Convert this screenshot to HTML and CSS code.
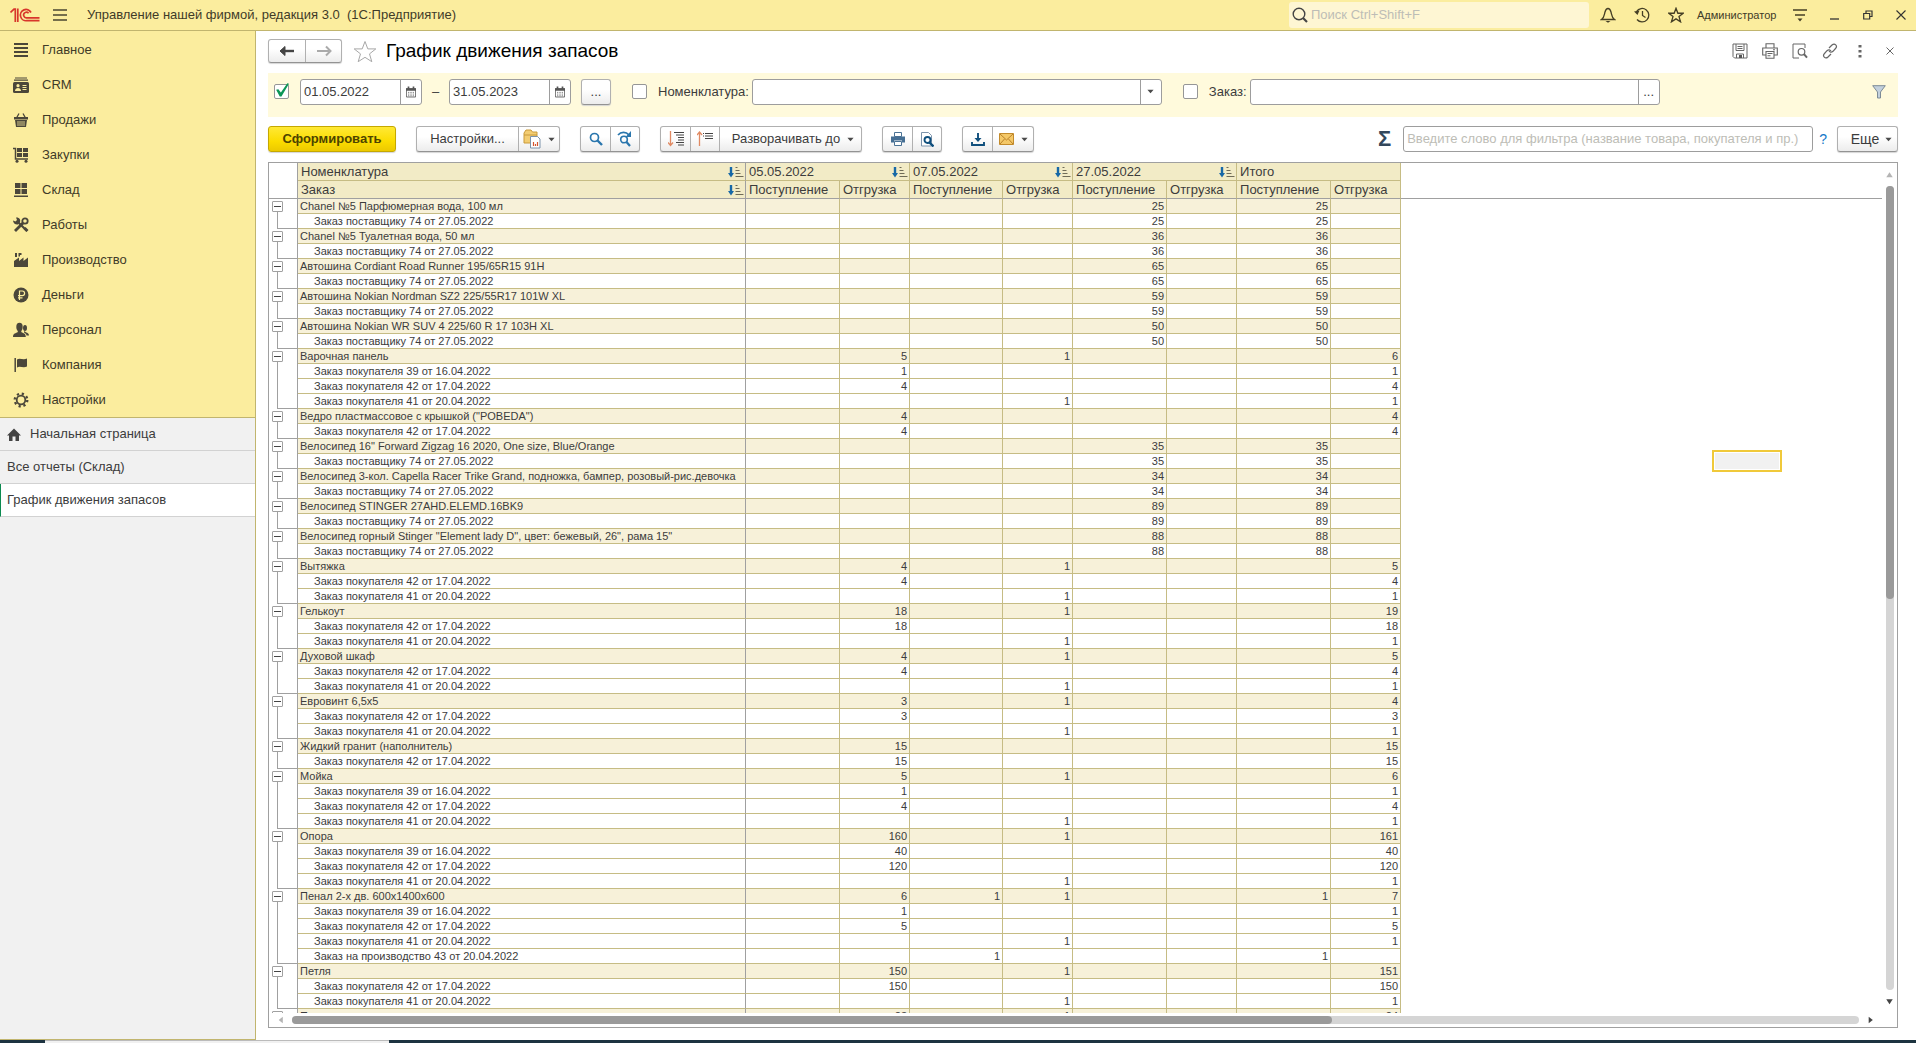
FILE: index.html
```html
<!DOCTYPE html>
<html lang="ru">
<head>
<meta charset="utf-8">
<title>График движения запасов</title>
<link rel="stylesheet" href="styles.css">
</head>
<body>
<svg class="defs" aria-hidden="true">
  <symbol id="sort" viewBox="0 0 16 12"><path d="M3 1v7" stroke="#1768a6" stroke-width="2.400"/><path d="M0 7h6L3 11.500z" fill="#1768a6"/><path d="M7.500 1.500h2M7.500 4.500h4M7.500 7.500h5M7.500 10.500h8" stroke="#6f6b57"/></symbol>
  <symbol id="caret" viewBox="0 0 8 5"><path d="M.5.500h7L4 4.500z" fill="#4a4a4a"/></symbol>
  <symbol id="cal" viewBox="0 0 12 13"><path d="M.5 2.500h11v10H.5z" fill="#fff" stroke="#555"/><path d="M0 2h12v3H0zM2 0h2v3H2zM8 0h2v3H8z" fill="#555"/><path d="M2.500 7h7M2.500 9h7M2.500 11h7" stroke="#555" stroke-dasharray="1 1"/></symbol>
  <symbol id="star" viewBox="0 0 24 23"><path d="M12 1.500l2.800 7.400h8l-6.300 5 2.300 7.800L12 17.300l-6.800 4.400 2.300-7.800-6.300-5h8z" fill="none" stroke="currentColor"/></symbol>
</svg>

<header class="titlebar">
  <svg class="logo" viewBox="0 0 30 14"><g fill="none" stroke="#d8362b" stroke-width="1.700"><path d="M.5 4.500L4 1.200h1.300V14M7.800 14V.5"/><path d="M21 4.500A5.600 5.600 0 1 0 17 12.600h12.500"/><path d="M18.600 5.300A2.800 2.800 0 1 0 17 9.800h12.500"/></g></svg>
  <button class="bare" aria-label="Главное меню"><svg width="14" height="12" viewBox="0 0 14 12"><path d="M0 1h14M0 6h14M0 11h14" stroke="#4a4630" stroke-width="1.300"/></svg></button>
  <span class="app-name">Управление нашей фирмой, редакция 3.0&nbsp; (1С:Предприятие)</span>
  <label class="search">
    <svg width="16" height="16" viewBox="0 0 16 16"><circle cx="7" cy="7" r="5.800" fill="none" stroke="#444" stroke-width="1.400"/><path d="M11 11l4 4" stroke="#444" stroke-width="2.200"/></svg>
    <input type="text" placeholder="Поиск Ctrl+Shift+F" aria-label="Поиск">
  </label>
  <div class="tools">
    <button class="bare" aria-label="Оповещения"><svg width="16" height="16" viewBox="0 0 16 16"><path d="M1.500 12.500c3-2 2.700-4.500 3.500-7.500.6-2.200 1.500-3.500 3-3.500s2.400 1.300 3 3.500c.8 3 .5 5.500 3.500 7.500z" fill="none" stroke="#453f25" stroke-width="1.300"/><path d="M5.500 14h5L8 15.800z" fill="#453f25"/></svg></button>
    <button class="bare" aria-label="История"><svg width="16" height="16" viewBox="0 0 16 16"><path d="M2.500 4.500A6.700 6.700 0 1 1 3 12.500M8.500 4v4.500l3 2" fill="none" stroke="#453f25" stroke-width="1.300"/><path d="M0 4.500l5.500-1L3.500 8z" fill="#453f25"/></svg></button>
    <button class="bare" aria-label="Избранное"><svg width="16" height="16" stroke-width="2"><use href="#star"/></svg></button>
  </div>
  <span class="user">Администратор</span>
  <div class="window-tools">
    <button class="bare" aria-label="Сервис"><svg width="14" height="13" viewBox="0 0 14 13"><path d="M0 1h14M2 6h10" stroke="#453f25" stroke-width="1.300"/><path d="M4.500 9.500h5L7 12.500z" fill="#453f25"/></svg></button>
    <button class="bare" aria-label="Свернуть"><svg width="10" height="10" viewBox="0 0 10 10"><path d="M0 9h9" stroke="#333" stroke-width="1.300"/></svg></button>
    <button class="bare" aria-label="Восстановить"><svg width="10" height="10" viewBox="0 0 10 10"><path d="M.7 3.500h6v5.500h-6zM3 3.500V1h6v5.500H6.700" fill="none" stroke="#333" stroke-width="1.200"/></svg></button>
    <button class="bare" aria-label="Закрыть"><svg width="10" height="10" viewBox="0 0 10 10"><path d="M.5.500l9 9M9.500.500l-9 9" stroke="#333" stroke-width="1.100"/></svg></button>
  </div>
</header>

<div class="workspace">
  <aside class="sidebar">
    <nav class="sections">
      <a href="#"><svg viewBox="0 0 16 16"><path d="M1 2h14M1 6h14M1 10h14M1 14h14" stroke="currentColor" stroke-width="2"/></svg>Главное</a>
      <a href="#"><svg viewBox="0 0 16 16"><path d="M2 1h12M1 3.200h14" stroke="currentColor" stroke-width="1.200"/><rect y="5" width="16" height="11" rx="1.500" fill="currentColor"/><path d="M9.500 8.500h4M9.500 10.500h4M9.500 12.500h4" stroke="#fbed9e"/><circle cx="5" cy="8.700" r="1.600" fill="#fbed9e"/><path d="M2 14c0-4 6-4 6 0z" fill="#fbed9e"/></svg>CRM</a>
      <a href="#"><svg viewBox="0 0 16 16"><path d="M3.500 6L6 1.500M12.500 6L10 1.500" stroke="currentColor" stroke-width="1.300"/><path d="M1 5h14v2.500H1zM2 8h12l-1 7H3z" fill="currentColor"/><path d="M5 9v5M7 9v5M9 9v5M11 9v5" stroke="#fbed9e" stroke-width=".8"/></svg>Продажи</a>
      <a href="#"><svg viewBox="0 0 16 16"><path d="M0 1.500h2.500V12H15" fill="none" stroke="currentColor" stroke-width="1.500"/><path d="M4 1h5v4H4zM10 1h5v4h-5zM4 6h5v4H4zM10 6h5v4h-5z" fill="currentColor"/><circle cx="4" cy="14.300" r="1.500" fill="currentColor"/><circle cx="13" cy="14.300" r="1.500" fill="currentColor"/></svg>Закупки</a>
      <a href="#"><svg viewBox="0 0 16 16"><path d="M2 1h5.500v5H2zM8.500 1H14v5H8.500zM2 7h5.500v5H2zM8.500 7H14v5H8.500zM1 13.500h14v1.500H1z" fill="currentColor"/></svg>Склад</a>
      <a href="#"><svg viewBox="0 0 16 16"><path d="M2 14l8-8" stroke="currentColor" stroke-width="2.800"/><path d="M5.500 5.500L14 14" stroke="currentColor" stroke-width="2.200"/><path d="M0 3.500l2.500 1 1.500-1.500-1-2.500c3-.5 5 2 4 4.500L5 7.500C2.500 8 0 6 0 3.500z" fill="currentColor"/><circle cx="12" cy="4" r="2.700" fill="none" stroke="currentColor" stroke-width="1.800"/><path d="M10.500 12l3 3 2-2-3-3z" fill="currentColor"/></svg>Работы</a>
      <a href="#"><svg viewBox="0 0 16 16"><path d="M1 15V9l5-3.500V9l4.500-3.500V9L15 5.500V15zM2 1h2v4H2zM5.500 1h3v2H7v1.500H5.500z" fill="currentColor"/></svg>Производство</a>
      <a href="#"><svg viewBox="0 0 16 16"><circle cx="8" cy="8" r="7.500" fill="currentColor"/><path d="M6.500 13V4h2.800a2.300 2.300 0 0 1 0 4.600H5M5 10.800h4.500" fill="none" stroke="#fbed9e" stroke-width="1.200"/></svg>Деньги</a>
      <a href="#"><svg viewBox="0 0 16 16"><ellipse cx="6.500" cy="5" rx="3.200" ry="4.200" fill="currentColor"/><path d="M0 15c0-4 3-3.500 4.800-5V8h3.500v2c1.800 1.500 4.500 1 4.500 5z" fill="currentColor"/><ellipse cx="12" cy="6" rx="2" ry="3" fill="currentColor"/><path d="M11.500 8.500c1 3 4.500 1.500 4.500 5h-2.500c0-2-2-2.500-2.500-3z" fill="currentColor"/></svg>Персонал</a>
      <a href="#"><svg viewBox="0 0 16 16"><path d="M2.200 1v14" stroke="currentColor" stroke-width="1.500"/><path d="M4 2.500c3-2 6 1 10-1v8c-4 2-7-1-10 1z" fill="currentColor"/></svg>Компания</a>
      <a href="#"><svg viewBox="0 0 16 16"><circle cx="8" cy="8" r="4.300" fill="none" stroke="currentColor" stroke-width="1.800"/><circle cx="8" cy="8" r="6.300" fill="none" stroke="currentColor" stroke-width="2.300" stroke-dasharray="2.200 2.750"/></svg>Настройки</a>
    </nav>
    <nav class="windows">
      <a href="#" class="home"><svg viewBox="0 0 14 13"><path d="M7 .5l7 7h-2V13H8.500V8.500h-3V13H2V7.500H0z" fill="currentColor"/></svg>Начальная страница</a>
      <a href="#">Все отчеты (Склад)</a>
      <a href="#" class="current">График движения запасов</a>
    </nav>
  </aside>

  <main class="content">
    <div class="form-head">
      <div class="group">
        <button aria-label="Назад"><svg width="16" height="12" viewBox="0 0 16 12"><path d="M3 6h12" stroke="#444" stroke-width="2.400"/><path d="M1 6l5-4.500v9z" fill="#444" stroke="#444"/></svg></button>
        <button aria-label="Вперед"><svg width="16" height="12" viewBox="0 0 16 12"><path d="M1 6h12" stroke="#aaa" stroke-width="2"/><path d="M10 1.500L14.500 6 10 10.500" fill="none" stroke="#aaa" stroke-width="2"/></svg></button>
      </div>
      <button class="bare favorite" aria-label="В избранное"><svg width="24" height="23"><use href="#star"/></svg></button>
      <h1>График движения запасов</h1>
      <div class="form-tools">
        <button class="bare" aria-label="Сохранить"><svg viewBox="0 0 16 16"><path d="M1 1h14v14H2.500L1 13.500zM4 1v6.500h8V1M5.500 3.500h5M5.500 5.500h5M4.500 15v-4h7v4" fill="none" stroke="#666"/><path d="M7 12h3v3H7z" fill="#555"/></svg></button>
        <button class="bare" aria-label="Печать"><svg viewBox="0 0 16 16"><path d="M4 5V.7h8V5M4 12H.7V5h14.600v7H12M4 8.500h8v6.800H4zM5.500 10.500h5M5.500 12.800h3M11 6.700h2" fill="none" stroke="#666" stroke-width="1.100"/></svg></button>
        <button class="bare" aria-label="Просмотр"><svg viewBox="0 0 16 16"><path d="M7 15H1V1h12v4" fill="none" stroke="#666"/><circle cx="9.500" cy="8.800" r="3.300" fill="none" stroke="#666" stroke-width="1.200"/><path d="M12 11.200l3 3.500" stroke="#666" stroke-width="2"/></svg></button>
        <button class="bare" aria-label="Ссылка"><svg viewBox="0 0 16 16"><path d="M7 5l3-3c2.700-2.500 6 .8 3.500 3.500L11 8.300c-1.500 1.300-3 1-4-.3M9 11l-3 3c-2.700 2.500-6-.8-3.500-3.500L5 7.700c1.500-1.300 3-1 4 .3" fill="none" stroke="#666" stroke-width="1.200"/></svg></button>
        <button class="bare" aria-label="Еще"><svg viewBox="0 0 16 16"><path d="M6.500 2h3v2.500h-3zM6.500 7h3v2.500h-3zM6.500 12h3v2.500h-3z" fill="#666"/></svg></button>
        <button class="bare" aria-label="Закрыть"><svg viewBox="0 0 16 16"><path d="M4.500 4.500l7 7M11.500 4.500l-7 7" stroke="#666"/></svg></button>
      </div>
    </div>

    <form class="filters">
      <input type="checkbox" checked aria-label="Период">
      <div class="field date"><input type="text" value="01.05.2022" aria-label="Начало периода"><button type="button" aria-label="Календарь"><svg width="10" height="12"><use href="#cal"/></svg></button></div>
      <span class="dash">–</span>
      <div class="field date"><input type="text" value="31.05.2023" aria-label="Конец периода"><button type="button" aria-label="Календарь"><svg width="10" height="12"><use href="#cal"/></svg></button></div>
      <button type="button" class="btn period">...</button>
      <input type="checkbox" id="by-item"><label for="by-item">Номенклатура:</label>
      <div class="field wide"><input type="text" aria-label="Номенклатура"><button type="button" aria-label="Выбрать"><svg width="7" height="5"><use href="#caret"/></svg></button></div>
      <input type="checkbox" id="by-order"><label for="by-order">Заказ:</label>
      <div class="field wide"><input type="text" aria-label="Заказ"><button type="button">...</button></div>
      <button type="button" class="bare funnel" aria-label="Отбор"><svg width="14" height="14" viewBox="0 0 14 14"><path d="M.7.700h12.600L8.500 7v6H5.500V7z" fill="#c3d0dd" stroke="#7d8b97"/></svg></button>
    </form>

    <div class="toolbar">
      <button class="btn primary">Сформировать</button>
      <div class="group">
        <button class="settings">Настройки...</button>
        <button class="with-caret" aria-label="Варианты"><svg width="18" height="20" viewBox="0 0 18 20"><path d="M1 4l2-3h5l1.500 2H14v11H1z" fill="#f3cd72" stroke="#c99a3a"/><path d="M1 6h13" stroke="#c99a3a"/><path d="M7.500 7.500h7l2.500 2.500v9H7.500z" fill="#fff" stroke="#7c93ab"/><path d="M10.500 17v-4M12.500 17v-2M14.500 17v-4" stroke="#d4552f" stroke-width="1.200"/></svg><svg width="7" height="5"><use href="#caret"/></svg></button>
      </div>
      <div class="group">
        <button aria-label="Найти"><svg width="14" height="14" viewBox="0 0 14 14"><circle cx="5.500" cy="5.500" r="4" fill="none" stroke="#2a76ad" stroke-width="1.700"/><path d="M8.500 8.500l4.500 4.500" stroke="#2a76ad" stroke-width="2.400"/></svg></button>
        <button aria-label="Найти далее"><svg width="16" height="16" viewBox="0 0 16 16"><circle cx="7" cy="8.500" r="3.300" fill="none" stroke="#2a76ad" stroke-width="1.600"/><path d="M9.500 11l3.500 4" stroke="#2a76ad" stroke-width="2.200"/><path d="M1 4c3-3.500 8-3.500 11 0" fill="none" stroke="#2a76ad" stroke-width="1.700"/><path d="M14 0v6H8.500z" fill="#2a76ad"/></svg></button>
      </div>
      <div class="group">
        <button aria-label="Развернуть"><svg width="16" height="16" viewBox="0 0 16 16"><path d="M2.500 0v14M0 11.500l2.500 3 2.500-3" fill="none" stroke="#e08a63" stroke-width="1.300"/><path d="M6 1.500h10M8 4h8M10 6.500h6M10 9h6M8 11.500h8M10 14h6" stroke="#444"/></svg></button>
        <button aria-label="Свернуть"><svg width="16" height="16" viewBox="0 0 16 16"><path d="M2.500 15V1M0 4l2.500-3L5 4" fill="none" stroke="#e08a63" stroke-width="1.300"/><path d="M6 2.500h1M8 2.500h8M6 5h1M8 5h8M8 7.500h8" stroke="#444" stroke-width="1.100"/></svg></button>
        <button class="expand">Разворачивать до<svg width="7" height="5"><use href="#caret"/></svg></button>
      </div>
      <div class="group">
        <button aria-label="Печать"><svg width="14" height="14" viewBox="0 0 14 14"><path d="M3.500.500h7v4h-7zM3.500 9.500h7v4h-7z" fill="#fff" stroke="#4b7396"/><path d="M0 4.500h14v6h-3V8.500H3v2H0z" fill="#466f94"/></svg></button>
        <button aria-label="Предварительный просмотр"><svg width="14" height="15" viewBox="0 0 14 15"><path d="M1.500.500h7l3 3v10.500h-10z" fill="#fff" stroke="#7c93ab"/><circle cx="7.500" cy="8" r="3" fill="#fff" stroke="#0f4f7d" stroke-width="1.900"/><path d="M9.500 10.500l4 4" stroke="#0f4f7d" stroke-width="2.400"/></svg></button>
      </div>
      <div class="group">
        <button aria-label="Сохранить"><svg width="14" height="13" viewBox="0 0 14 13"><path d="M7 0v6M1 9v3h12V9" fill="none" stroke="#0f4f7d" stroke-width="1.900"/><path d="M3.500 5h7L7 9z" fill="#0f4f7d"/></svg></button>
        <button class="with-caret" aria-label="Отправить"><svg width="15" height="12" viewBox="0 0 15 12"><path d="M.5.500h14v11H.5z" fill="#f4c868" stroke="#c38b2c"/><path d="M1 1l6.500 6L14 1M1 11l4.500-5M14 11L9.500 6" fill="none" stroke="#b9812a"/></svg><svg width="7" height="5"><use href="#caret"/></svg></button>
      </div>
      <span class="sigma">Σ</span>
      <div class="field lookup"><input type="text" placeholder="Введите слово для фильтра (название товара, покупателя и пр.)" aria-label="Фильтр"></div>
      <a href="#" class="help">?</a>
      <button class="btn more">Еще<svg width="7" height="5"><use href="#caret"/></svg></button>
    </div>

    <section class="sheet">
      <div class="view">
        <table>
          <colgroup><col class="c-tree"><col class="c-name"><col class="c-in"><col class="c-out"><col class="c-in2"><col class="c-out"><col class="c-in"><col class="c-out"><col class="c-in"><col class="c-out"><col></colgroup>
          <thead>
            <tr><td class="tree" rowspan="2"></td><th><div>Номенклатура<svg><use href="#sort"/></svg></div></th><th colspan="2"><div>05.05.2022<svg><use href="#sort"/></svg></div></th><th colspan="2"><div>07.05.2022<svg><use href="#sort"/></svg></div></th><th colspan="2"><div>27.05.2022<svg><use href="#sort"/></svg></div></th><th colspan="2"><div>Итого</div></th><td class="rest"></td></tr>
            <tr><th><div>Заказ<svg><use href="#sort"/></svg></div></th><th>Поступление</th><th>Отгрузка</th><th>Поступление</th><th>Отгрузка</th><th>Поступление</th><th>Отгрузка</th><th>Поступление</th><th>Отгрузка</th><td class="rest"></td></tr>
          </thead>
          <tbody>
            <tr><td class="tree" rowspan="2"><button aria-label="Свернуть группу"></button></td><td>Chanel №5 Парфюмерная вода, 100 мл</td><td></td><td></td><td></td><td></td><td>25</td><td></td><td>25</td><td></td></tr>
            <tr><td>Заказ поставщику 74 от 27.05.2022</td><td></td><td></td><td></td><td></td><td>25</td><td></td><td>25</td><td></td></tr>
          </tbody>
          <tbody>
            <tr><td class="tree" rowspan="2"><button aria-label="Свернуть группу"></button></td><td>Chanel №5 Туалетная вода, 50 мл</td><td></td><td></td><td></td><td></td><td>36</td><td></td><td>36</td><td></td></tr>
            <tr><td>Заказ поставщику 74 от 27.05.2022</td><td></td><td></td><td></td><td></td><td>36</td><td></td><td>36</td><td></td></tr>
          </tbody>
          <tbody>
            <tr><td class="tree" rowspan="2"><button aria-label="Свернуть группу"></button></td><td>Автошина Cordiant Road Runner 195/65R15 91H</td><td></td><td></td><td></td><td></td><td>65</td><td></td><td>65</td><td></td></tr>
            <tr><td>Заказ поставщику 74 от 27.05.2022</td><td></td><td></td><td></td><td></td><td>65</td><td></td><td>65</td><td></td></tr>
          </tbody>
          <tbody>
            <tr><td class="tree" rowspan="2"><button aria-label="Свернуть группу"></button></td><td>Автошина Nokian Nordman SZ2 225/55R17 101W XL</td><td></td><td></td><td></td><td></td><td>59</td><td></td><td>59</td><td></td></tr>
            <tr><td>Заказ поставщику 74 от 27.05.2022</td><td></td><td></td><td></td><td></td><td>59</td><td></td><td>59</td><td></td></tr>
          </tbody>
          <tbody>
            <tr><td class="tree" rowspan="2"><button aria-label="Свернуть группу"></button></td><td>Автошина Nokian WR SUV 4 225/60 R 17 103H XL</td><td></td><td></td><td></td><td></td><td>50</td><td></td><td>50</td><td></td></tr>
            <tr><td>Заказ поставщику 74 от 27.05.2022</td><td></td><td></td><td></td><td></td><td>50</td><td></td><td>50</td><td></td></tr>
          </tbody>
          <tbody>
            <tr><td class="tree" rowspan="4"><button aria-label="Свернуть группу"></button></td><td>Варочная панель</td><td></td><td>5</td><td></td><td>1</td><td></td><td></td><td></td><td>6</td></tr>
            <tr><td>Заказ покупателя 39 от 16.04.2022</td><td></td><td>1</td><td></td><td></td><td></td><td></td><td></td><td>1</td></tr>
            <tr><td>Заказ покупателя 42 от 17.04.2022</td><td></td><td>4</td><td></td><td></td><td></td><td></td><td></td><td>4</td></tr>
            <tr><td>Заказ покупателя 41 от 20.04.2022</td><td></td><td></td><td></td><td>1</td><td></td><td></td><td></td><td>1</td></tr>
          </tbody>
          <tbody>
            <tr><td class="tree" rowspan="2"><button aria-label="Свернуть группу"></button></td><td>Ведро пластмассовое с крышкой ("POBEDA")</td><td></td><td>4</td><td></td><td></td><td></td><td></td><td></td><td>4</td></tr>
            <tr><td>Заказ покупателя 42 от 17.04.2022</td><td></td><td>4</td><td></td><td></td><td></td><td></td><td></td><td>4</td></tr>
          </tbody>
          <tbody>
            <tr><td class="tree" rowspan="2"><button aria-label="Свернуть группу"></button></td><td>Велосипед 16" Forward Zigzag 16 2020, One size, Blue/Orange</td><td></td><td></td><td></td><td></td><td>35</td><td></td><td>35</td><td></td></tr>
            <tr><td>Заказ поставщику 74 от 27.05.2022</td><td></td><td></td><td></td><td></td><td>35</td><td></td><td>35</td><td></td></tr>
          </tbody>
          <tbody>
            <tr><td class="tree" rowspan="2"><button aria-label="Свернуть группу"></button></td><td>Велосипед 3-кол. Capella Racer Trike Grand, подножка, бампер, розовый-рис.девочка</td><td></td><td></td><td></td><td></td><td>34</td><td></td><td>34</td><td></td></tr>
            <tr><td>Заказ поставщику 74 от 27.05.2022</td><td></td><td></td><td></td><td></td><td>34</td><td></td><td>34</td><td></td></tr>
          </tbody>
          <tbody>
            <tr><td class="tree" rowspan="2"><button aria-label="Свернуть группу"></button></td><td>Велосипед STINGER 27AHD.ELEMD.16BK9</td><td></td><td></td><td></td><td></td><td>89</td><td></td><td>89</td><td></td></tr>
            <tr><td>Заказ поставщику 74 от 27.05.2022</td><td></td><td></td><td></td><td></td><td>89</td><td></td><td>89</td><td></td></tr>
          </tbody>
          <tbody>
            <tr><td class="tree" rowspan="2"><button aria-label="Свернуть группу"></button></td><td>Велосипед горный Stinger "Element lady D", цвет: бежевый, 26", рама 15"</td><td></td><td></td><td></td><td></td><td>88</td><td></td><td>88</td><td></td></tr>
            <tr><td>Заказ поставщику 74 от 27.05.2022</td><td></td><td></td><td></td><td></td><td>88</td><td></td><td>88</td><td></td></tr>
          </tbody>
          <tbody>
            <tr><td class="tree" rowspan="3"><button aria-label="Свернуть группу"></button></td><td>Вытяжка</td><td></td><td>4</td><td></td><td>1</td><td></td><td></td><td></td><td>5</td></tr>
            <tr><td>Заказ покупателя 42 от 17.04.2022</td><td></td><td>4</td><td></td><td></td><td></td><td></td><td></td><td>4</td></tr>
            <tr><td>Заказ покупателя 41 от 20.04.2022</td><td></td><td></td><td></td><td>1</td><td></td><td></td><td></td><td>1</td></tr>
          </tbody>
          <tbody>
            <tr><td class="tree" rowspan="3"><button aria-label="Свернуть группу"></button></td><td>Гелькоут</td><td></td><td>18</td><td></td><td>1</td><td></td><td></td><td></td><td>19</td></tr>
            <tr><td>Заказ покупателя 42 от 17.04.2022</td><td></td><td>18</td><td></td><td></td><td></td><td></td><td></td><td>18</td></tr>
            <tr><td>Заказ покупателя 41 от 20.04.2022</td><td></td><td></td><td></td><td>1</td><td></td><td></td><td></td><td>1</td></tr>
          </tbody>
          <tbody>
            <tr><td class="tree" rowspan="3"><button aria-label="Свернуть группу"></button></td><td>Духовой шкаф</td><td></td><td>4</td><td></td><td>1</td><td></td><td></td><td></td><td>5</td></tr>
            <tr><td>Заказ покупателя 42 от 17.04.2022</td><td></td><td>4</td><td></td><td></td><td></td><td></td><td></td><td>4</td></tr>
            <tr><td>Заказ покупателя 41 от 20.04.2022</td><td></td><td></td><td></td><td>1</td><td></td><td></td><td></td><td>1</td></tr>
          </tbody>
          <tbody>
            <tr><td class="tree" rowspan="3"><button aria-label="Свернуть группу"></button></td><td>Евровинт 6,5х5</td><td></td><td>3</td><td></td><td>1</td><td></td><td></td><td></td><td>4</td></tr>
            <tr><td>Заказ покупателя 42 от 17.04.2022</td><td></td><td>3</td><td></td><td></td><td></td><td></td><td></td><td>3</td></tr>
            <tr><td>Заказ покупателя 41 от 20.04.2022</td><td></td><td></td><td></td><td>1</td><td></td><td></td><td></td><td>1</td></tr>
          </tbody>
          <tbody>
            <tr><td class="tree" rowspan="2"><button aria-label="Свернуть группу"></button></td><td>Жидкий гранит (наполнитель)</td><td></td><td>15</td><td></td><td></td><td></td><td></td><td></td><td>15</td></tr>
            <tr><td>Заказ покупателя 42 от 17.04.2022</td><td></td><td>15</td><td></td><td></td><td></td><td></td><td></td><td>15</td></tr>
          </tbody>
          <tbody>
            <tr><td class="tree" rowspan="4"><button aria-label="Свернуть группу"></button></td><td>Мойка</td><td></td><td>5</td><td></td><td>1</td><td></td><td></td><td></td><td>6</td></tr>
            <tr><td>Заказ покупателя 39 от 16.04.2022</td><td></td><td>1</td><td></td><td></td><td></td><td></td><td></td><td>1</td></tr>
            <tr><td>Заказ покупателя 42 от 17.04.2022</td><td></td><td>4</td><td></td><td></td><td></td><td></td><td></td><td>4</td></tr>
            <tr><td>Заказ покупателя 41 от 20.04.2022</td><td></td><td></td><td></td><td>1</td><td></td><td></td><td></td><td>1</td></tr>
          </tbody>
          <tbody>
            <tr><td class="tree" rowspan="4"><button aria-label="Свернуть группу"></button></td><td>Опора</td><td></td><td>160</td><td></td><td>1</td><td></td><td></td><td></td><td>161</td></tr>
            <tr><td>Заказ покупателя 39 от 16.04.2022</td><td></td><td>40</td><td></td><td></td><td></td><td></td><td></td><td>40</td></tr>
            <tr><td>Заказ покупателя 42 от 17.04.2022</td><td></td><td>120</td><td></td><td></td><td></td><td></td><td></td><td>120</td></tr>
            <tr><td>Заказ покупателя 41 от 20.04.2022</td><td></td><td></td><td></td><td>1</td><td></td><td></td><td></td><td>1</td></tr>
          </tbody>
          <tbody>
            <tr><td class="tree" rowspan="5"><button aria-label="Свернуть группу"></button></td><td>Пенал 2-х дв. 600х1400х600</td><td></td><td>6</td><td>1</td><td>1</td><td></td><td></td><td>1</td><td>7</td></tr>
            <tr><td>Заказ покупателя 39 от 16.04.2022</td><td></td><td>1</td><td></td><td></td><td></td><td></td><td></td><td>1</td></tr>
            <tr><td>Заказ покупателя 42 от 17.04.2022</td><td></td><td>5</td><td></td><td></td><td></td><td></td><td></td><td>5</td></tr>
            <tr><td>Заказ покупателя 41 от 20.04.2022</td><td></td><td></td><td></td><td>1</td><td></td><td></td><td></td><td>1</td></tr>
            <tr><td>Заказ на производство 43 от 20.04.2022</td><td></td><td></td><td>1</td><td></td><td></td><td></td><td>1</td><td></td></tr>
          </tbody>
          <tbody>
            <tr><td class="tree" rowspan="3"><button aria-label="Свернуть группу"></button></td><td>Петля</td><td></td><td>150</td><td></td><td>1</td><td></td><td></td><td></td><td>151</td></tr>
            <tr><td>Заказ покупателя 42 от 17.04.2022</td><td></td><td>150</td><td></td><td></td><td></td><td></td><td></td><td>150</td></tr>
            <tr><td>Заказ покупателя 41 от 20.04.2022</td><td></td><td></td><td></td><td>1</td><td></td><td></td><td></td><td>1</td></tr>
          </tbody>
          <tbody>
            <tr><td class="tree"><button aria-label="Свернуть группу"></button></td><td>Полка</td><td></td><td>23</td><td></td><td>1</td><td></td><td></td><td></td><td>24</td></tr>
          </tbody>
        </table>
        <div class="cell-cursor"></div>
      </div>
      <div class="vscroll"><i class="up"></i><div class="track"><div class="thumb" style="height: 51.4%"></div></div><i class="down"></i></div>
      <div class="hscroll"><i class="left"></i><div class="track"><div class="thumb" style="width: 66.4%"></div></div><i class="right"></i></div>
    </section>
  </main>
</div>
<footer class="taskbar"><div class="task"></div></footer>
</body>
</html>
```
FILE: styles.css
```css
* { box-sizing: border-box; }

body {
  margin: 0;
  height: 100vh;
  display: flex;
  flex-direction: column;
  overflow: hidden;
  background: #fff;
  color: #3c3c3c;
  font: 13px/16px "Liberation Sans", Arial, sans-serif;
}

button, input { font: inherit; color: inherit; margin: 0; padding: 0; }
a { color: inherit; text-decoration: none; }
svg { display: block; flex: none; }
.defs { position: absolute; width: 0; height: 0; }

.bare {
  display: flex;
  align-items: center;
  justify-content: center;
  border: 0;
  background: none;
}

/* Title bar */
.titlebar {
  display: flex;
  align-items: center;
  flex: none;
  height: 31px;
  padding: 0 10px;
  background: #fbed9e;
  border-bottom: 1px solid #c1b56e;
}
.logo { width: 30px; height: 14px; margin-right: 13px; }
.app-name { margin-left: 20px; color: #3f3b28; white-space: nowrap; }
.search {
  display: flex;
  align-items: center;
  gap: 3px;
  width: 300px;
  height: 26px;
  margin-left: auto;
  padding-left: 3px;
  border-radius: 3px;
  background: #fef6d3;
}
.search input { flex: 1; min-width: 0; border: 0; background: none; outline: none; }
::placeholder { color: #bdbdb6; opacity: 1; }
.tools { display: flex; gap: 18px; margin-left: 11px; color: #453f25; }
.user { width: 82px; margin: 0 14px 0 13px; font-size: 11px; white-space: nowrap; color: #3f3b28; }
.window-tools { display: flex; align-items: center; gap: 23px; }

.workspace { display: flex; flex: 1; min-height: 0; }

/* Side panel */
.sidebar {
  flex: none;
  width: 256px;
  background: #f1f1f1;
  border-right: 1px solid #c1b56e;
  border-bottom: 1px solid #c1b56e;
}
.sections {
  padding-top: 1px;
  background: #fbed9e;
  border-bottom: 1px solid #c1b56e;
}
.sections a { display: flex; align-items: center; gap: 13px; height: 35px; padding-left: 13px; color: #3f3b28; }
.sections svg { width: 16px; height: 16px; color: #4b473a; }
.windows a {
  display: flex;
  align-items: center;
  height: 33px;
  padding-left: 7px;
  border-bottom: 1px solid #d2d2d2;
}
.windows .home { gap: 9px; }
.windows svg { width: 14px; height: 13px; color: #444; }
.windows .current { padding-left: 6px; background: #fff; border-left: 1px solid #0c8a50; }

/* Form */
.content {
  display: flex;
  flex-direction: column;
  flex: 1;
  min-width: 0;
  padding: 8px 18px 12px 12px;
}
.form-head { display: flex; align-items: center; height: 24px; margin-bottom: 10px; }
.favorite { margin: 0 9px 0 11px; color: #a8a8a8; }
h1 { margin: 0; font-size: 19px; line-height: 24px; font-weight: 400; color: #000; }
.form-tools { display: flex; gap: 14px; margin-left: auto; }
.form-tools svg { width: 16px; height: 16px; }

.group, .btn {
  display: flex;
  border: 1px solid #b0b0b0;
  border-bottom-color: #939393;
  border-radius: 3px;
  background: linear-gradient(#fff, #fff 40%, #ececec);
  box-shadow: 0 1px 1px #d5d5d5;
}
.group button {
  display: flex;
  align-items: center;
  justify-content: center;
  width: 29px;
  border: 0;
  border-left: 1px solid #b0b0b0;
  background: none;
}
.group button:first-child { border-left: 0; }
.form-head .group { height: 24px; }
.form-head .group button { width: 36px; }

.filters {
  display: flex;
  align-items: center;
  height: 44px;
  margin-bottom: 9px;
  padding: 0 12px 7px 6px;
  background: #fffadc;
}
.filters input[type="checkbox"] {
  appearance: none;
  flex: none;
  width: 15px;
  height: 15px;
  border: 1px solid #969696;
  border-radius: 2px;
  background: #fff;
}
.filters input[type="checkbox"]:checked::before {
  content: "";
  display: block;
  width: 14px;
  height: 14px;
  margin-top: -2px;
  background: #0c9657;
  clip-path: polygon(8% 48%, 24% 44%, 42% 68%, 88% 2%, 100% 6%, 46% 96%, 34% 96%);
}
.field {
  display: flex;
  height: 26px;
  border: 1px solid #9d9d9d;
  border-radius: 3px;
  background: #fff;
}
.field input { flex: 1; min-width: 0; padding-left: 3px; border: 0; outline: none; background: none; }
.field button {
  display: flex;
  align-items: center;
  justify-content: center;
  width: 21px;
  border: 0;
  border-left: 1px solid #9d9d9d;
  background: none;
}
.date { width: 122px; margin-left: 11px; }
.dash { width: 27px; text-align: center; }
.dash + .date { margin-left: 0; }
.period { width: 30px; height: 26px; margin: 0 21px 0 10px; align-items: center; justify-content: center; }
.filters label { margin: 0 3px 0 11px; white-space: nowrap; }
.wide { flex: 0 1 410px; margin-right: 21px; }
.funnel { margin-left: auto; }

/* Command bar */
.toolbar { display: flex; align-items: center; height: 26px; margin-bottom: 10px; }
.toolbar .group { height: 26px; margin-right: 20px; }
.toolbar .btn { height: 26px; align-items: center; justify-content: center; }
.toolbar .primary {
  width: 128px;
  margin-right: 20px;
  border-color: #c5a800;
  background: linear-gradient(#ffe935, #fbdc00 60%, #ecc900);
  color: #4c4300;
  font-weight: 700;
}
.toolbar .settings { width: 101px; }
.toolbar .with-caret { width: 41px; gap: 7px; }
.toolbar .expand { width: 142px; gap: 7px; padding-left: 5px; white-space: nowrap; }
.sigma { margin: 0 12px 0 auto; font: bold 22px/26px "Liberation Sans", Arial, sans-serif; color: #33475b; }
.lookup { flex: 0 1 410px; }
.help { margin: 0 10px 0 6px; font-size: 14px; color: #1578c8; }
.toolbar .more { width: 61px; gap: 6px; padding-left: 8px; font-size: 14px; }

/* Report sheet */
.sheet {
  display: grid;
  grid-template: minmax(0, 1fr) 14px / minmax(0, 1fr) 15px;
  flex: 1;
  min-height: 0;
  border: 1px solid #a0a0a0;
}
.view { position: relative; overflow: hidden; }
table { width: 100%; table-layout: fixed; border-collapse: separate; border-spacing: 0; }
.c-tree { width: 29px; }
.c-name { width: 448px; }
.c-in { width: 94px; }
.c-in2 { width: 93px; }
.c-out { width: 70px; }

th {
  height: 18px;
  padding: 0 0 0 3px;
  border: solid #c6bc84;
  border-width: 0 1px 1px 0;
  background: #f2ebc6;
  font-weight: 400;
  line-height: 17px;
  text-align: left;
}
th div { display: flex; align-items: center; justify-content: space-between; }
th svg { width: 16px; height: 12px; margin-right: 1px; }
thead tr:last-child > * { border-bottom-color: #a0a0a0; }
thead .rest { padding: 0; border-right: 0; border-bottom: 0; }
thead tr:last-child .rest { border-bottom: 1px solid #a0a0a0; }

td {
  height: 15px;
  padding: 0 2px;
  border: solid #c6bc84;
  border-width: 0 1px 1px 0;
  font-size: 11px;
  line-height: 14px;
  text-align: right;
  white-space: nowrap;
}
tbody tr:first-child td { background-color: #f7f1d9; }
tr td:first-child { padding-left: 16px; text-align: left; }
td.tree + td { text-align: left; }
tr > td.tree + td, tr:not(:first-child) > td:first-child, thead th:nth-child(2), thead tr:last-child th:first-child { border-right-color: #a0a0a0; }
thead tr:last-child th:nth-child(2) { border-right-color: #c6bc84; }

tr > td.tree:first-child {
  padding: 2px 0 0 3px;
  border-color: #a0a0a0;
  border-bottom: 0;
  vertical-align: top;
}
thead tr > td.tree:first-child { border-bottom: 1px solid #a0a0a0; }
/* Bracket that ties a group's rows to its toggle */
tbody tr:first-child > td.tree {
  background: linear-gradient(#a0a0a0, #a0a0a0) 8px 100% / 1px calc(100% - 13px) no-repeat,
    linear-gradient(#a0a0a0, #a0a0a0) 8px 100% / 20px 1px no-repeat;
}
.tree button {
  display: block;
  width: 11px;
  height: 11px;
  border: 1px solid #a0a0a0;
  border-radius: 1px;
  background: linear-gradient(#444, #444) center / 7px 1px no-repeat #fff;
}
.cell-cursor {
  position: absolute;
  top: 287px;
  right: 100px;
  width: 70px;
  height: 22px;
  border: 2px solid #f0c93a;
  background: #f1f1f1;
  box-shadow: inset 0 0 0 1px #fff;
}

.vscroll, .hscroll { display: flex; align-items: center; }
.vscroll { flex-direction: column; }
.hscroll { grid-column: 1 / -1; padding-right: 15px; }
.track { flex: 1; border-radius: 4px; background: #d5d5d5; }
.thumb { border-radius: 4px; background: #9a9a9a; }
.vscroll .track { width: 8px; }
.hscroll .track, .hscroll .thumb { height: 8px; }
.vscroll i, .hscroll i { width: 23px; height: 23px; background: #444; }
.up { clip-path: polygon(50% 40%, 64% 62%, 36% 62%); opacity: .4; }
.down { clip-path: polygon(50% 62%, 64% 40%, 36% 40%); }
.hscroll .left { clip-path: polygon(42% 50%, 60% 36%, 60% 64%); opacity: .4; }
.hscroll .right { clip-path: polygon(60% 50%, 42% 36%, 42% 64%); }

.taskbar { flex: none; height: 3px; padding-left: 45px; background: #1d3340; }
.task { width: 344px; height: 3px; background: #f1f1f1; border-top: 1px solid #bbb; }
```
